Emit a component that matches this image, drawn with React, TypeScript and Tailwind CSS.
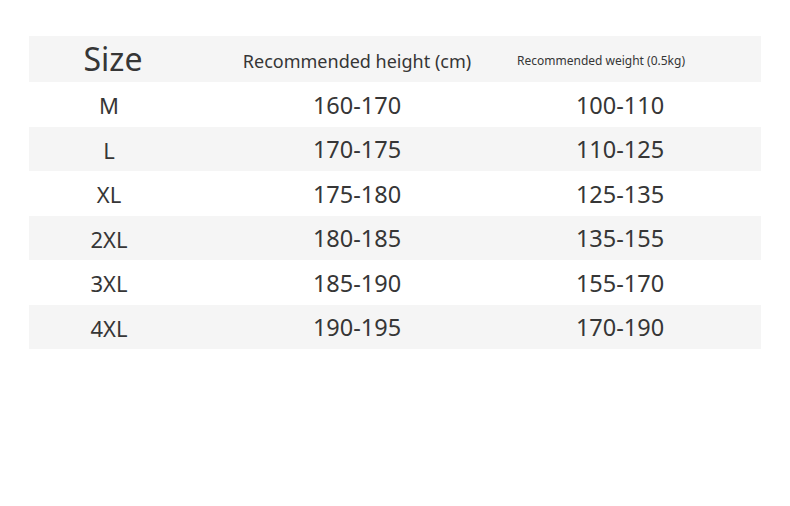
import React from "react";

const rows = [
  ["M", "160-170", "100-110"],
  ["L", "170-175", "110-125"],
  ["XL", "175-180", "125-135"],
  ["2XL", "180-185", "135-155"],
  ["3XL", "185-190", "155-170"],
  ["4XL", "190-195", "170-190"],
];

export default function App() {
  return (
    <div
      className="w-[790px] h-[506px] bg-white pt-[36px] pl-[29px] text-[#363636]"
      style={{ fontFamily: '"Noto Sans", "Open Sans", sans-serif' }}
    >
      <div className="w-[732px] flex flex-col">
        <div className="flex h-[46px] items-center bg-[#f5f5f5]">
          <div className="w-[168px] text-center text-[32px] leading-none">Size</div>
          <div className="w-[320px] pt-[3px] text-center text-[18px] leading-none">Recommended height (cm)</div>
          <div className="w-[168px] pt-[3px] text-center text-[12px] leading-none">Recommended weight (0.5kg)</div>
        </div>
        {rows.map((r, i) => (
          <div
            key={r[0]}
            className={`flex h-[44.5px] items-center pt-[2px] ${i % 2 === 0 ? "bg-white" : "bg-[#f5f5f5]"}`}
          >
            <div className="w-[160px] text-center text-[22px] leading-none">{r[0]}</div>
            <div className="w-[336px] text-center text-[23.5px] leading-none">{r[1]}</div>
            <div className="w-[190px] text-center text-[23.5px] leading-none">{r[2]}</div>
          </div>
        ))}
      </div>
    </div>
  );
}
